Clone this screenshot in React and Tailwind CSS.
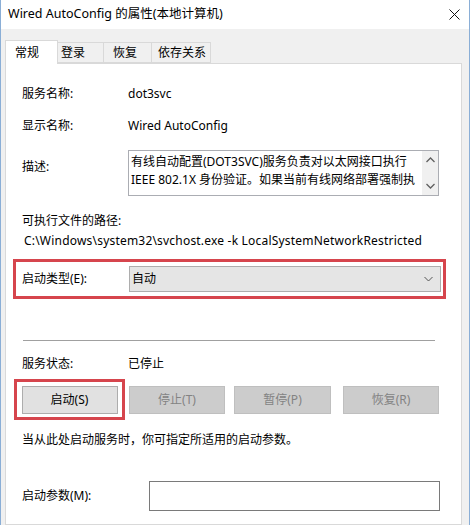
export default function App() {
  const font = { fontFamily: '"Noto Sans", "Noto Sans CJK SC", sans-serif' };
  return (
    <div
      style={font}
      className="w-[470px] h-[525px] overflow-hidden bg-[#f0f0f0] border-x border-[#8aaed6] text-[12px] text-black leading-none flex flex-col"
    >
      {/* title bar */}
      <div className="h-[29px] bg-white flex items-center justify-between pl-[7px] pr-[9px] shrink-0">
        <span className="text-[12.5px]">Wired AutoConfig 的属性(本地计算机)</span>
        <svg width="11" height="11" viewBox="0 0 11 11" className="mt-[-1px]">
          <path d="M0.5 0.5 L10.5 10.5 M10.5 0.5 L0.5 10.5" stroke="#111" strokeWidth="1" />
        </svg>
      </div>

      {/* tabs */}
      <div className="flex items-end pl-[4px] pt-[10px] h-[34px] shrink-0 relative z-10">
        <div className="w-[53px] h-[24px] bg-white border border-b-0 border-[#d9d9d9] flex items-center pl-[9px] mb-[-1px]">
          常规
        </div>
        <div className="w-[46px] h-[21px] border border-l-0 border-[#d9d9d9] flex items-center pl-[3px]">登录</div>
        <div className="w-[48px] h-[21px] border border-l-0 border-[#d9d9d9] flex items-center pl-[9px]">恢复</div>
        <div className="w-[59px] h-[21px] border border-l-0 border-[#d9d9d9] flex items-center pl-[6px]">依存关系</div>
      </div>

      {/* panel */}
      <div className="ml-[4px] w-[457px] flex-1 bg-white border border-[#d9d9d9] flex flex-col">
        <div className="h-[20px] mt-[20px] flex items-center pl-[16px]">
          <span className="w-[106px]">服务名称:</span>
          <span>dot3svc</span>
        </div>
        <div className="h-[20px] mt-[12px] flex items-center pl-[16px]">
          <span className="w-[106px]">显示名称:</span>
          <span>Wired AutoConfig</span>
        </div>

        <div className="mt-[14px] flex pl-[16px]">
          <span className="w-[106px] pt-[11px]">描述:</span>
          <div className="w-[311px] h-[46px] border border-[#abadb3] flex">
            <div className="flex-1 pl-[2px] pt-[2px] leading-[18px] whitespace-nowrap overflow-hidden">
              <div>有线自动配置(DOT3SVC)服务负责对以太网接口执行</div>
              <div>IEEE 802.1X 身份验证。如果当前有线网络部署强制执</div>
            </div>
            <div className="w-[16px] bg-[#f0f0f0] flex flex-col items-center justify-between py-[6px]">
              <svg width="9" height="6" viewBox="0 0 9 6">
                <path d="M0.5 5 L4.5 1 L8.5 5" fill="none" stroke="#606060" strokeWidth="1.3" />
              </svg>
              <svg width="9" height="6" viewBox="0 0 9 6">
                <path d="M0.5 1 L4.5 5 L8.5 1" fill="none" stroke="#606060" strokeWidth="1.3" />
              </svg>
            </div>
          </div>
        </div>

        <div className="h-[20px] mt-[15px] flex items-center pl-[16px]">可执行文件的路径:</div>
        <div className="h-[20px] flex items-center pl-[18px] tracking-[0.2px]">
          C:\Windows\system32\svchost.exe -k LocalSystemNetworkRestricted
        </div>

        <div className="mt-[8px] ml-[7px] w-[433px] h-[40px] border-[3px] border-[#d6454d] flex items-center pl-[6px]">
          <span className="w-[107px]">启动类型(E):</span>
          <div className="w-[312px] h-[26px] bg-[#e5e5e5] border border-[#adadad] flex items-center justify-between pl-[2px] pr-[7px]">
            <span>自动</span>
            <svg width="9" height="6" viewBox="0 0 9 6">
              <path d="M0.5 1 L4.5 5 L8.5 1" fill="none" stroke="#555" strokeWidth="1" />
            </svg>
          </div>
        </div>

        <div className="mt-[41px] ml-[17px] w-[412px] h-px bg-[#a0a0a0]"></div>

        <div className="h-[20px] mt-[13px] flex items-center pl-[16px]">
          <span className="w-[106px]">服务状态:</span>
          <span>已停止</span>
        </div>

        <div className="mt-[5px] flex items-center">
          <div className="ml-[8px] w-[111px] h-[41px] border-[3px] border-[#d6454d] flex items-center justify-center">
            <div className="w-[96px] h-[28px] bg-[#e1e1e1] border border-[#adadad] flex items-center justify-center">
              启动(S)
            </div>
          </div>
          <div className="ml-[4px] w-[96px] h-[28px] bg-[#cccccc] border border-[#bfbfbf] flex items-center justify-center text-[#838383]">
            停止(T)
          </div>
          <div className="ml-[9px] w-[97px] h-[28px] bg-[#cccccc] border border-[#bfbfbf] flex items-center justify-center text-[#838383]">
            暂停(P)
          </div>
          <div className="ml-[12px] w-[96px] h-[28px] bg-[#cccccc] border border-[#bfbfbf] flex items-center justify-center text-[#838383]">
            恢复(R)
          </div>
        </div>

        <div className="h-[20px] mt-[10px] flex items-center pl-[16px]">
          当从此处启动服务时，你可指定所适用的启动参数。
        </div>

        <div className="mt-[31px] flex items-center pl-[16px]">
          <span className="w-[127px]">启动参数(M):</span>
          <div className="w-[291px] h-[30px] border border-[#7a7a7a] bg-white"></div>
        </div>
      </div>
    </div>
  );
}
